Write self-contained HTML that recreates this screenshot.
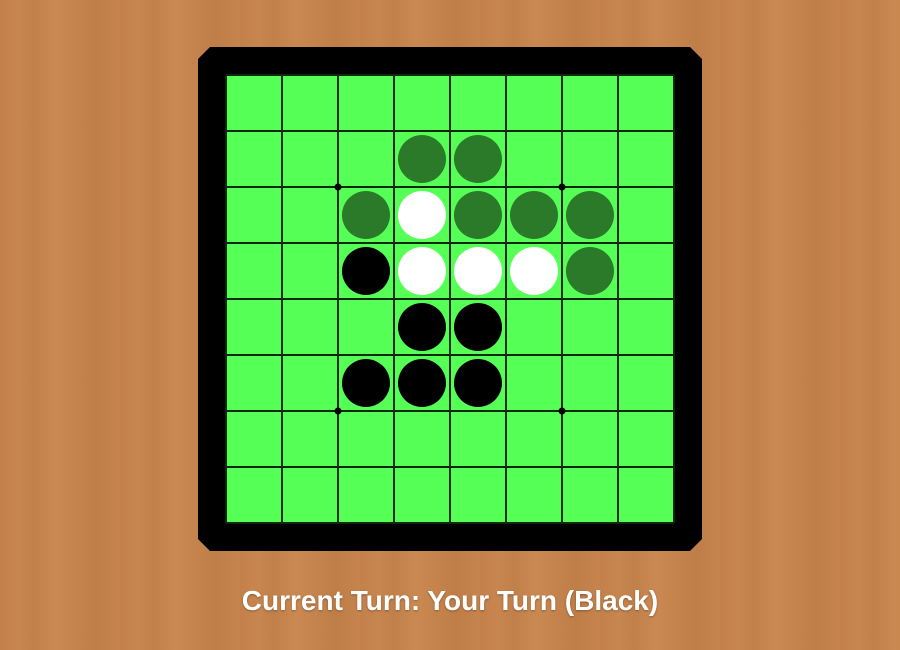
<!DOCTYPE html>
<html><head><style>
html,body{margin:0;padding:0}
body{width:900px;height:650px;overflow:hidden;position:relative;
background:repeating-linear-gradient(90deg,#c3804a 0px,#c7864f 18px,#c1804a 34px,#c98951 55px,#c4834c 78px,#bf7d47 96px,#c5854d 120px);}
svg{position:absolute;left:0;top:0}
.t{position:absolute;left:0;width:900px;top:585px;text-align:center;color:#fff;font:bold 28px "Liberation Sans",sans-serif;text-shadow:0 1px 2px rgba(0,0,0,.3)}
</style></head><body>
<svg width="900" height="650">
<polygon points="210,47 690,47 702,59 702,539 690,551 210,551 198,539 198,59" fill="#000"/>
<rect x="226" y="75" width="448" height="448" fill="#56ff56"/>
<g stroke="#0a2a0a" stroke-width="2">
<line x1="226" y1="75" x2="226" y2="523"/><line x1="282" y1="75" x2="282" y2="523"/><line x1="338" y1="75" x2="338" y2="523"/><line x1="394" y1="75" x2="394" y2="523"/><line x1="450" y1="75" x2="450" y2="523"/><line x1="506" y1="75" x2="506" y2="523"/><line x1="562" y1="75" x2="562" y2="523"/><line x1="618" y1="75" x2="618" y2="523"/><line x1="674" y1="75" x2="674" y2="523"/>
<line y1="75" x1="226" y2="75" x2="674"/><line y1="131" x1="226" y2="131" x2="674"/><line y1="187" x1="226" y2="187" x2="674"/><line y1="243" x1="226" y2="243" x2="674"/><line y1="299" x1="226" y2="299" x2="674"/><line y1="355" x1="226" y2="355" x2="674"/><line y1="411" x1="226" y2="411" x2="674"/><line y1="467" x1="226" y2="467" x2="674"/><line y1="523" x1="226" y2="523" x2="674"/>
</g>
<g fill="#000"><circle cx="338" cy="187" r="3.5"/><circle cx="562" cy="187" r="3.5"/><circle cx="338" cy="411" r="3.5"/><circle cx="562" cy="411" r="3.5"/></g>
<g fill="#2a7a2a"><circle cx="422" cy="159" r="24"/><circle cx="478" cy="159" r="24"/><circle cx="366" cy="215" r="24"/><circle cx="478" cy="215" r="24"/><circle cx="534" cy="215" r="24"/><circle cx="590" cy="215" r="24"/><circle cx="590" cy="271" r="24"/></g>
<g fill="#fff"><circle cx="422" cy="215" r="24"/><circle cx="422" cy="271" r="24"/><circle cx="478" cy="271" r="24"/><circle cx="534" cy="271" r="24"/></g>
<g fill="#000"><circle cx="366" cy="271" r="24"/><circle cx="422" cy="327" r="24"/><circle cx="478" cy="327" r="24"/><circle cx="366" cy="383" r="24"/><circle cx="422" cy="383" r="24"/><circle cx="478" cy="383" r="24"/></g>
</svg>
<div class="t">Current Turn: Your Turn (Black)</div>
</body></html>
